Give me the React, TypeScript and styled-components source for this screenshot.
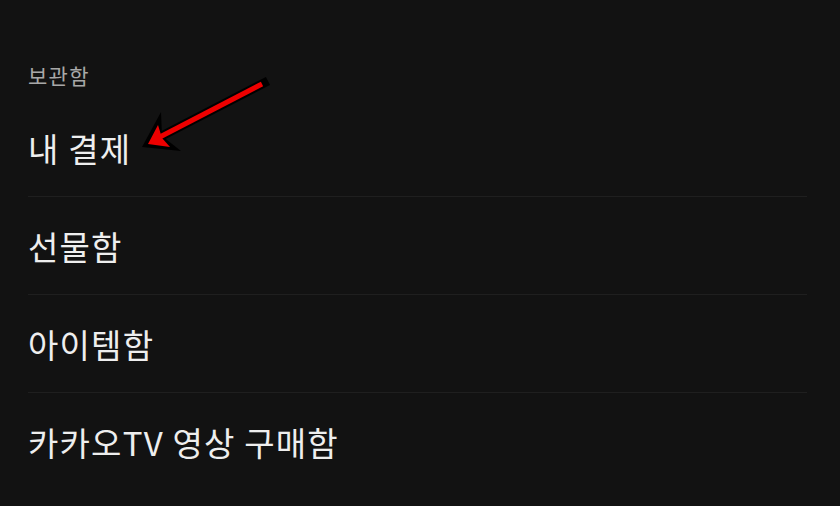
import React from "react";
import styled, { createGlobalStyle } from "styled-components";

const GlobalStyle = createGlobalStyle`
  html, body {
    margin: 0;
    padding: 0;
    background: #121212;
  }
  body {
    font-family: "Noto Sans CJK KR", "Noto Sans", sans-serif;
  }
`;

const Page = styled.div`
  position: relative;
  width: 840px;
  height: 506px;
  box-sizing: border-box;
  padding: 58px 33px 0 28px;
  background: #121212;
  overflow: hidden;
`;

const SectionTitle = styled.div`
  height: 34px;
  line-height: 34px;
  font-size: 21px;
  letter-spacing: 1.3px;
  color: #a8a8a8;
  margin-bottom: 7px;
`;

const MenuList = styled.div`
  display: flex;
  flex-direction: column;
`;

const MenuRow = styled.div<{ $last?: boolean }>`
  height: 97px;
  display: flex;
  align-items: center;
  font-size: 33px;
  letter-spacing: 1.2px;
  color: #eeeeee;
  border-bottom: 1px solid ${(p) => (p.$last ? "transparent" : "#1f1f1f")};
`;

const Pointer = styled.svg`
  position: absolute;
  left: 0;
  top: 0;
  pointer-events: none;
`;

const items = ["내 결제", "선물함", "아이템함", "카카오TV 영상 구매함"];

export default function App() {
  return (
    <>
      <GlobalStyle />
      <Page>
        <SectionTitle>보관함</SectionTitle>
        <MenuList>
          {items.map((label, i) => (
            <MenuRow key={label} $last={i === items.length - 1}>
              {label}
            </MenuRow>
          ))}
        </MenuList>
        <Pointer width="840" height="506" viewBox="0 0 840 506">
          <line x1="264" y1="83" x2="156" y2="139" stroke="#000" strokeWidth="9" strokeLinecap="square" />
          <polygon points="142,147 161,112 162,136 181,151" fill="#000" />
          <line x1="262" y1="84" x2="156" y2="139" stroke="#ee0000" strokeWidth="5" strokeLinecap="butt" />
          <polygon points="148,144 158,125 162,138 170,147" fill="#ee0000" />
        </Pointer>
      </Page>
    </>
  );
}
